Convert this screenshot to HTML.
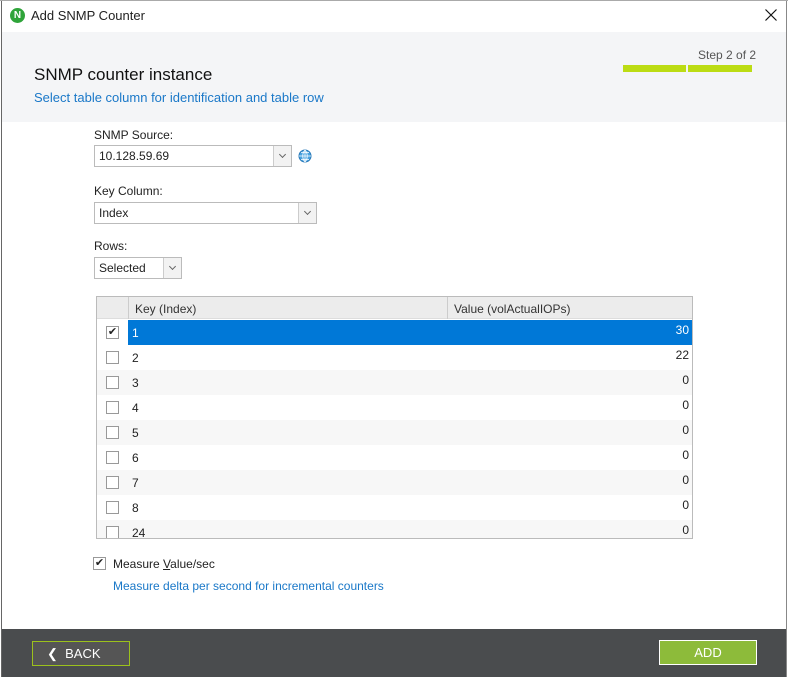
<!DOCTYPE html>
<html><head><style>
*{margin:0;padding:0;box-sizing:border-box}
body{width:788px;height:677px;overflow:hidden;background:#fff;font-family:"Segoe UI","Liberation Sans",sans-serif;font-size:12px;color:#222;position:relative}
.a{position:absolute}
.win{left:1px;top:0;width:786px;height:677px;border-left:1px solid #666;border-right:1px solid #888}
.sel{border:1px solid #bbb;background:#fff;height:22px;font-size:12px;padding:3px 0 0 4px}
.arr{position:absolute;right:0;top:0;width:18px;height:20px;border-left:1px solid #ccc;background:#f2f2f2}
.arr:after{content:"";position:absolute;left:6px;top:6px;width:4px;height:4px;border-right:1.5px solid #666;border-bottom:1.5px solid #666;transform:rotate(45deg)}
.row{position:absolute;left:97px;width:595px;height:25px}
.cb{position:absolute;left:9px;top:6px;width:13px;height:13px;border:1px solid #999;background:#fff}
.k{position:absolute;left:35px;top:6px}
.v{position:absolute;right:3px;top:3px}
</style></head><body>
<div class="a win"></div>
<div class="a" style="left:0;top:0;width:788px;height:1px;background:#aaa"></div>
<div class="a" style="left:10px;top:8px;width:15px;height:15px;border-radius:50%;background:#2fa43a;color:#fff;font-size:10px;font-weight:bold;text-align:center;line-height:15px">N</div>
<div class="a" style="left:31px;top:8px;font-size:13px">Add SNMP Counter</div>
<svg class="a" style="left:765px;top:9px" width="12" height="12"><path d="M0.5 0.5L11.5 11.5M11.5 0.5L0.5 11.5" stroke="#111" stroke-width="1.2"/></svg>
<div class="a" style="left:2px;top:32px;width:784px;height:90px;background:#f4f5f7"></div>
<div class="a" style="left:34px;top:65px;font-size:17px;color:#111">SNMP counter instance</div>
<div class="a" style="left:34px;top:90px;font-size:13px;color:#1a78c8">Select table column for identification and table row</div>
<div class="a" style="left:698px;top:48px;font-size:12px;color:#555">Step 2 of 2</div>
<div class="a" style="left:623px;top:65px;width:63px;height:7px;background:#bcdc14"></div>
<div class="a" style="left:688px;top:65px;width:64px;height:7px;background:#bcdc14"></div>

<div class="a" style="left:94px;top:128px">SNMP Source:</div>
<div class="a sel" style="left:94px;top:145px;width:198px">10.128.59.69<div class="arr"></div></div>
<svg class="a" style="left:298px;top:149px" width="14" height="14"><circle cx="7" cy="7" r="6" fill="#4aa3e0" stroke="#2a7ab9"/><path d="M1 7H13M7 1V13M3 3.5H11M3 10.5H11M7 1C4 4 4 10 7 13M7 1C10 4 10 10 7 13" stroke="#fff" stroke-width="0.8" fill="none"/></svg>
<div class="a" style="left:94px;top:184px">Key Column:</div>
<div class="a sel" style="left:94px;top:202px;width:223px">Index<div class="arr"></div></div>
<div class="a" style="left:94px;top:239px">Rows:</div>
<div class="a sel" style="left:94px;top:257px;width:88px">Selected<div class="arr"></div></div>

<div class="a" style="left:96px;top:296px;width:597px;height:243px;border:1px solid #bbb;overflow:hidden"></div>
<div class="a" style="left:97px;top:297px;width:595px;height:22px;background:#ececec;border-bottom:1px solid #ddd"></div>
<div class="a" style="left:128px;top:297px;width:1px;height:22px;background:#ccc"></div>
<div class="a" style="left:447px;top:297px;width:1px;height:22px;background:#ccc"></div>
<div class="a" style="left:135px;top:302px;color:#333">Key (Index)</div>
<div class="a" style="left:454px;top:302px;color:#333">Value (volActualIOPs)</div>

<div class="row" style="top:320px"><div class="a" style="left:31px;top:0;width:564px;height:25px;background:#0078d7"></div><div class="cb" style="text-align:center;line-height:11px;font-size:11px">✔</div><div class="k" style="color:#fff">1</div><div class="v" style="color:#fff">30</div></div>
<div class="row" style="top:345px;background:#fff"><div class="cb"></div><div class="k">2</div><div class="v">22</div></div>
<div class="row" style="top:370px;background:#f7f7f7"><div class="cb"></div><div class="k">3</div><div class="v">0</div></div>
<div class="row" style="top:395px;background:#fff"><div class="cb"></div><div class="k">4</div><div class="v">0</div></div>
<div class="row" style="top:420px;background:#f7f7f7"><div class="cb"></div><div class="k">5</div><div class="v">0</div></div>
<div class="row" style="top:445px;background:#fff"><div class="cb"></div><div class="k">6</div><div class="v">0</div></div>
<div class="row" style="top:470px;background:#f7f7f7"><div class="cb"></div><div class="k">7</div><div class="v">0</div></div>
<div class="row" style="top:495px;background:#fff"><div class="cb"></div><div class="k">8</div><div class="v">0</div></div>
<div class="row" style="top:520px;height:18px;background:#f7f7f7;overflow:hidden"><div class="cb"></div><div class="k">24</div><div class="v">0</div></div>

<div class="a" style="left:93px;top:557px;width:13px;height:13px;border:1px solid #999;font-size:11px;line-height:11px;text-align:center">✔</div>
<div class="a" style="left:113px;top:557px">Measure <u>V</u>alue/sec</div>
<div class="a" style="left:113px;top:579px;color:#1a78c8">Measure delta per second for incremental counters</div>

<div class="a" style="left:2px;top:629px;width:784px;height:48px;background:#4a4c4e"></div>
<div class="a" style="left:32px;top:641px;width:98px;height:25px;border:1px solid #9cc11c;background:#555;color:#fff;font-size:13px;padding:4px 0 0 14px">❮&nbsp; BACK</div>
<div class="a" style="left:659px;top:640px;width:98px;height:25px;border:1px solid #fff;background:#8dbb3a;color:#fff;font-size:13px;text-align:center;padding-top:4px">ADD</div>
</body></html>
